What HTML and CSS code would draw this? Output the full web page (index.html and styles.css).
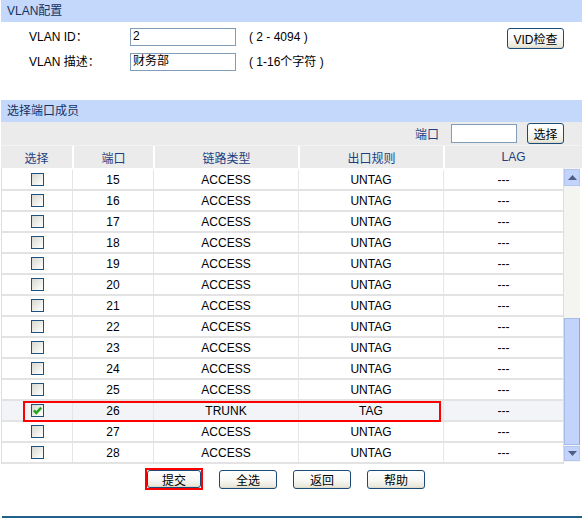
FILE: index.html
```html
<!DOCTYPE html>
<html>
<head>
<meta charset="utf-8">
<link rel="stylesheet" href="styles.css">
</head>
<body>
<div class="page">
  <div class="bar">VLAN配置</div>
  <div class="form">
    <div class="frow">
      <span class="lbl">VLAN ID：</span>
      <span class="txt">2</span>
      <span class="hint">( 2 - 4094 )</span>
      <span class="btn vid">VID检查</span>
    </div>
    <div class="frow">
      <span class="lbl">VLAN 描述：</span>
      <span class="txt">财务部</span>
      <span class="hint">( 1-16个字符 )</span>
    </div>
  </div>
  <div class="bar">选择端口成员</div>
  <div class="tools">
    <span class="tlbl">端口</span>
    <span class="txt small"></span>
    <span class="btn sel">选择</span>
  </div>
  <div class="thead">
    <div>选择</div><div>端口</div><div>链路类型</div><div>出口规则</div><div>LAG</div>
  </div>
  <div class="tbody">
    <div class="rows">
      <div class="row"><div><span class="cb"></span></div><div>15</div><div>ACCESS</div><div>UNTAG</div><div>---</div></div>
      <div class="row"><div><span class="cb"></span></div><div>16</div><div>ACCESS</div><div>UNTAG</div><div>---</div></div>
      <div class="row"><div><span class="cb"></span></div><div>17</div><div>ACCESS</div><div>UNTAG</div><div>---</div></div>
      <div class="row"><div><span class="cb"></span></div><div>18</div><div>ACCESS</div><div>UNTAG</div><div>---</div></div>
      <div class="row"><div><span class="cb"></span></div><div>19</div><div>ACCESS</div><div>UNTAG</div><div>---</div></div>
      <div class="row"><div><span class="cb"></span></div><div>20</div><div>ACCESS</div><div>UNTAG</div><div>---</div></div>
      <div class="row"><div><span class="cb"></span></div><div>21</div><div>ACCESS</div><div>UNTAG</div><div>---</div></div>
      <div class="row"><div><span class="cb"></span></div><div>22</div><div>ACCESS</div><div>UNTAG</div><div>---</div></div>
      <div class="row"><div><span class="cb"></span></div><div>23</div><div>ACCESS</div><div>UNTAG</div><div>---</div></div>
      <div class="row"><div><span class="cb"></span></div><div>24</div><div>ACCESS</div><div>UNTAG</div><div>---</div></div>
      <div class="row"><div><span class="cb"></span></div><div>25</div><div>ACCESS</div><div>UNTAG</div><div>---</div></div>
      <div class="row hl"><div><span class="cb"><svg width="11" height="11" viewBox="0 0 11 11"><path d="M1.8 5.3 L4.3 7.9 L9.2 2.6" fill="none" stroke="#22a322" stroke-width="2.4"/></svg></span></div><div>26</div><div>TRUNK</div><div>TAG</div><div>---</div></div>
      <div class="row"><div><span class="cb"></span></div><div>27</div><div>ACCESS</div><div>UNTAG</div><div>---</div></div>
      <div class="row"><div><span class="cb"></span></div><div>28</div><div>ACCESS</div><div>UNTAG</div><div>---</div></div>
      <div class="redbox"></div>
    </div>
    <div class="sb">
      <div class="sbbtn"><svg width="9" height="5" viewBox="0 0 9 5"><path d="M0 5 L4.5 0 L9 5 Z" fill="#4d5f86"/></svg></div>
      <div class="track"><div class="thumb"></div></div>
      <div class="sbbtn"><svg width="9" height="5" viewBox="0 0 9 5"><path d="M0 0 L4.5 5 L9 0 Z" fill="#4d5f86"/></svg></div>
    </div>
  </div>
  <div class="actions">
    <span class="redwrap"><span class="btn act inner">提交</span></span>
    <span class="btn act">全选</span>
    <span class="btn act">返回</span>
    <span class="btn act">帮助</span>
  </div>
  <div class="footline"></div>
</div>
</body>
</html>
```

FILE: styles.css
```css
html, body {
  margin: 0;
  padding: 0;
  background: #ffffff;
}
body {
  font-family: "Liberation Sans", "Noto Sans CJK SC", sans-serif;
  font-size: 12px;
  color: #000;
}
.page {
  width: 581px;
  margin-left: 1px;
  height: 518px;
  position: relative;
}
.bar {
  height: 22px;
  line-height: 23px;
  background: #c4d8fb;
  padding-left: 6px;
  color: #17325f;
}
.form {
  display: flex;
  flex-direction: column;
  gap: 7px;
  padding: 6px 18px 29px 28px;
}
.frow {
  display: flex;
  align-items: flex-start;
  height: 18px;
}
.lbl {
  width: 101px;
  line-height: 18px;
}
.txt {
  box-sizing: border-box;
  width: 106px;
  height: 18px;
  border: 1px solid #7f9db9;
  background: #fff;
  line-height: 15px;
  padding-left: 2px;
  font-size: 12px;
}
.hint {
  margin-left: 13px;
  line-height: 18px;
}
.btn {
  box-sizing: border-box;
  display: inline-flex;
  align-items: center;
  justify-content: center;
  border: 1px solid #1b4a78;
  border-radius: 3px;
  background: linear-gradient(#ffffff 0%, #f7f7f4 55%, #ebe9dc 90%, #d9d6c5 100%);
  color: #000;
  font-size: 12px;
}
.vid {
  margin-left: auto;
  width: 57px;
  height: 21px;
}
.tools {
  height: 23px;
  background: #ebebeb;
  display: flex;
  justify-content: flex-end;
  align-items: center;
  padding-right: 18px;
}
.tlbl {
  color: #1e3f80;
  margin-right: 12px;
  margin-bottom: 1px;
}
.txt.small {
  width: 66px;
  height: 19px;
}
.sel {
  margin-left: 10px;
  width: 37px;
  height: 21px;
}
.thead {
  display: grid;
  grid-template-columns: 71px 81px 145px 145px 1fr;
  height: 23px;
  background: #ebebeb;
  border-top: 1px solid #f3f3f3;
  box-sizing: border-box;
  color: #1e3f80;
}
.thead > div {
  display: flex;
  align-items: center;
  justify-content: center;
}
.thead > div + div {
  border-left: 2px solid #ffffff;
}
.tbody {
  display: flex;
  align-items: flex-start;
  height: 296px;
}
.rows {
  position: relative;
  width: 563px;
  padding-top: 2px;
  border-left: 1px solid #dedede;
  border-right: 1px solid #dedede;
  box-sizing: border-box;
}
.row {
  display: grid;
  grid-template-columns: 70px 81px 145px 145px 1fr;
  height: 21px;
  border-bottom: 2px solid #e3e3e3;
  box-sizing: border-box;
}
.row.hl {
  background: #f3f4f8;
}
.row > div {
  display: flex;
  align-items: center;
  justify-content: center;
}
.row > div + div {
  border-left: 1px solid #e6e6e6;
}
.cb {
  box-sizing: border-box;
  width: 13px;
  height: 13px;
  border: 1px solid #1c5180;
  background: linear-gradient(135deg, #d8d8d0 0%, #f0f0ec 60%, #ffffff 100%);
  display: inline-flex;
  align-items: center;
  justify-content: center;
}
.redbox {
  position: absolute;
  left: 21px;
  top: 233px;
  width: 418px;
  height: 21px;
  border: 2px solid #ff0000;
  box-sizing: border-box;
}
.sb {
  width: 16px;
  height: 294px;
  display: flex;
  flex-direction: column;
  background: #f4f4f0;
}
.sbbtn {
  box-sizing: border-box;
  height: 17px;
  background: #c3d4fc;
  border: 1px solid #b4c6ee;
  display: flex;
  align-items: center;
  justify-content: center;
}
.sbbtn:first-child {
  margin-top: 1px;
}
.sbbtn:last-child {
  margin-bottom: 1px;
  height: 15px;
}
.track {
  flex: 1;
}
.thumb {
  margin-top: 132px;
  height: 127px;
  box-sizing: border-box;
  background: #c3d4fc;
  border: 1px solid #a7bbe9;
  border-right-color: #8fa6d8;
}
.actions {
  display: flex;
  align-items: center;
  gap: 16px;
  padding-left: 144px;
  margin-top: 4px;
  height: 22px;
}
.redwrap {
  box-sizing: border-box;
  width: 58px;
  height: 22px;
  border: 2px solid #ff0000;
  display: flex;
  align-items: center;
  justify-content: center;
}
.act {
  width: 58px;
  height: 19px;
}
.act.inner {
  width: 54px;
  height: 18px;
}
.footline {
  margin-top: 26px;
  margin-left: 1px;
  height: 2px;
  background: #21618c;
}
```
